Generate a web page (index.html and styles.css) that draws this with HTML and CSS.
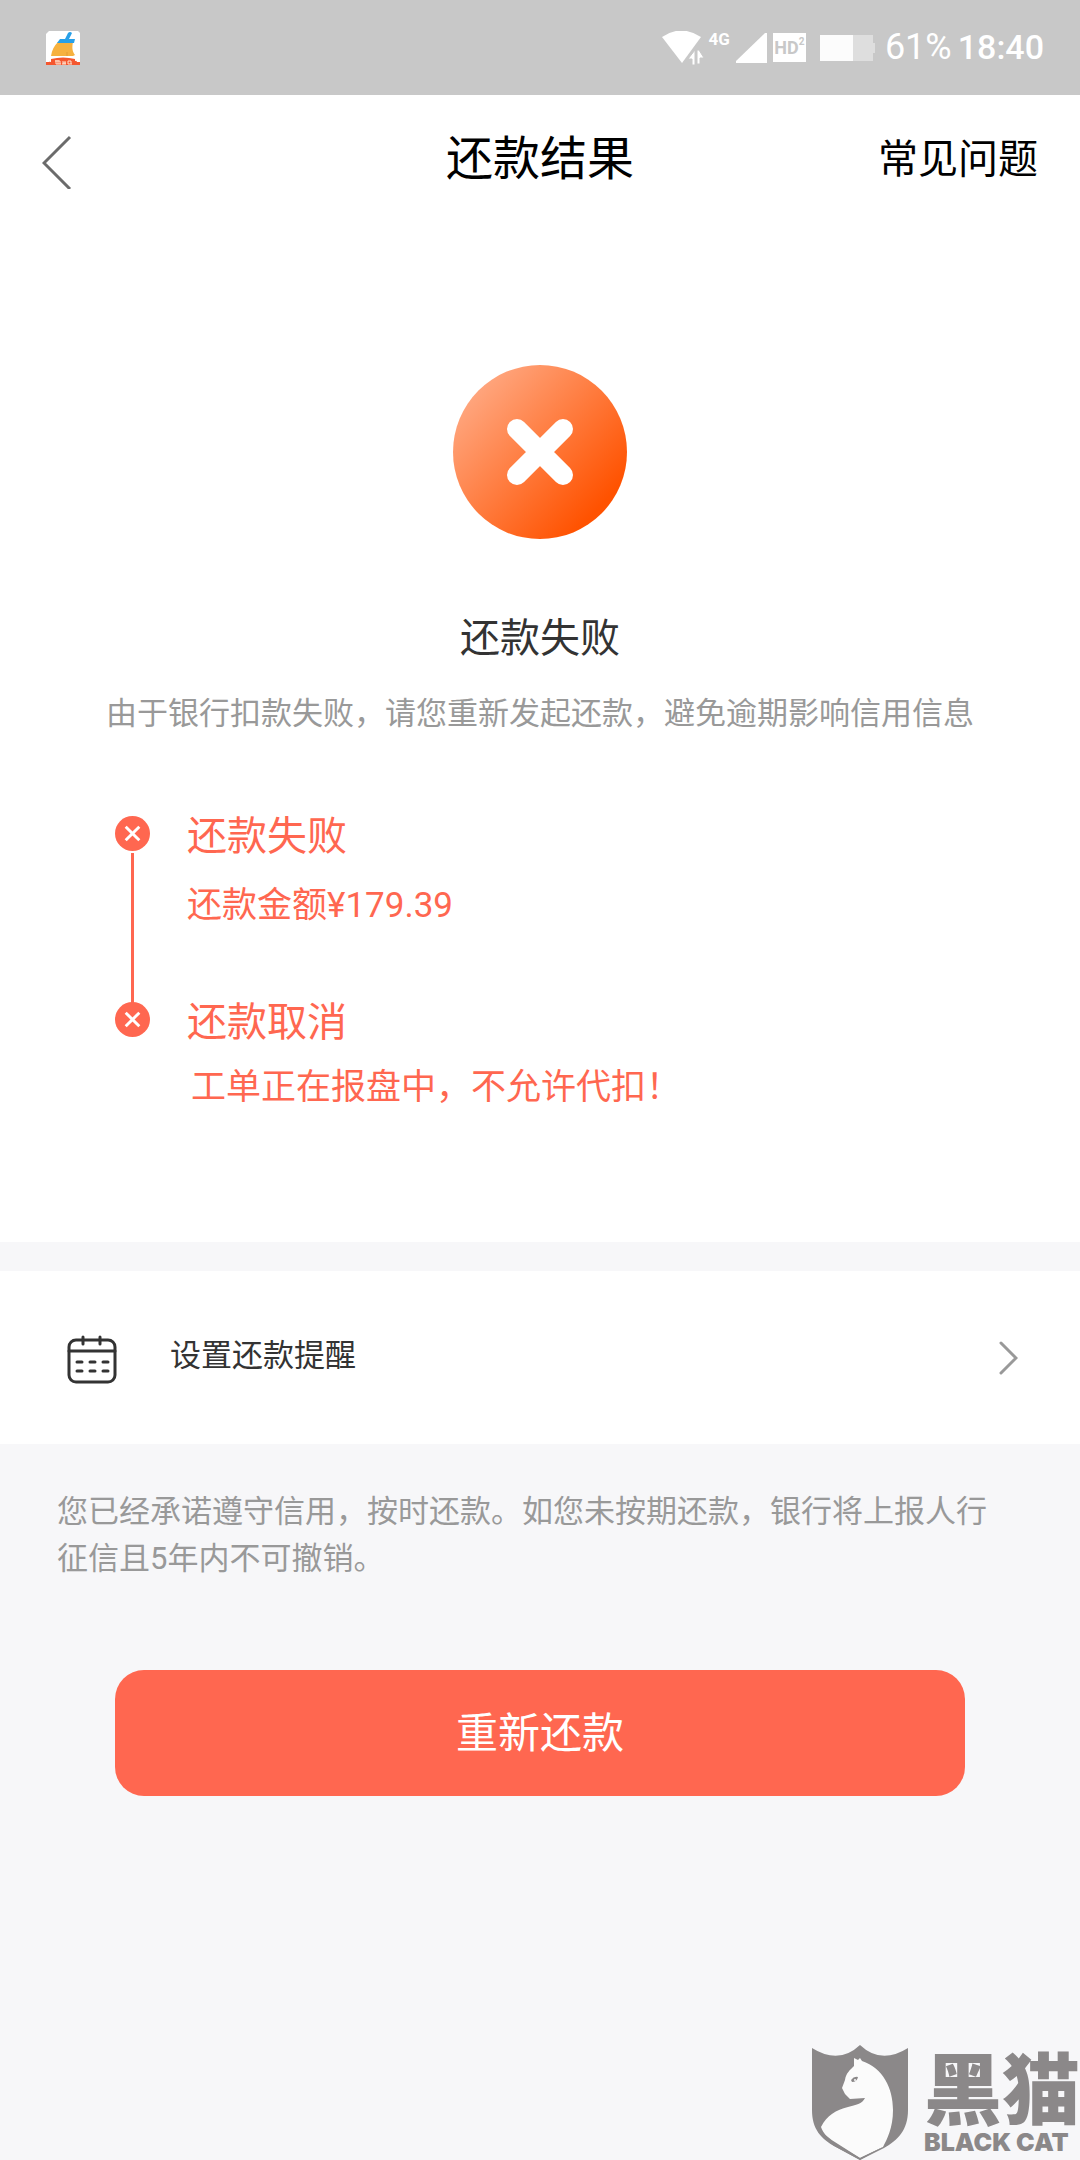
FILE: index.html
```html
<!DOCTYPE html>
<html lang="zh-CN">
<head>
  <meta charset="UTF-8">
  <meta name="viewport" content="width=device-width, initial-scale=1">
  <title>还款结果</title>
  <link rel="stylesheet" href="styles.css">
</head>
<body>

  <div class="status-bar">
    <svg class="app-icon" viewBox="0 0 34 34" aria-hidden="true">
      <path fill="#fff" d="M3 0h29l2 2v32H0V3z"/>
      <path fill="#f6b13f" d="M12 11h15c-1 5-1 9 2 13l-2 1H5c1-6 3-10 7-14z"/>
      <path stroke="#e39a35" d="M21 21v4" fill="none"/>
      <path fill="#28a0e8" d="M14 8h5l3-6q2-2 4 0l-3 6h6l-1 4H11z"/>
      <path fill="#f4572f" d="M5 28q12-3 24 0v2l5-1v5H0v-4l5 1z"/>
      <path stroke="#ffe3cf" stroke-width="1" d="M10 29v4m2-4v4m2-3v3m3-3v3m2-3v3m3-3v3m3-3v3M9 30h5m3 2h3m2-2h3M10 33h5m1 0h4m2 0h4" fill="none"/>
      <path fill="#fff" d="M0 28l4 1-1 2H0zm34 0l-4 1 1 2h3z"/>
    </svg>

    <div class="status-right">
      <svg class="wifi" viewBox="0 0 42 34" aria-hidden="true">
        <path fill="#fff" d="M0 6Q19-7 39 6L20 32z"/>
        <path fill="#fff" stroke="#c8c8c8" d="M26 28l7-9v15h-3v-6zM35 33V19h2l5 8h-4v6z"/>
      </svg>
      <span class="network">4G</span>
      <svg class="signal" viewBox="0 0 31 30" aria-hidden="true">
        <path fill="#fff" d="M0 30v-2L29 0h2v30z"/>
      </svg>
      <span class="hd">HD<sup>2</sup></span>
      <svg class="battery" viewBox="0 0 55 26" aria-hidden="true">
        <path fill="#dedede" d="M33 0h20v8h2v10h-2v8H33z"/>
        <path fill="#fcfcfc" d="M0 0h33v26H0z"/>
      </svg>
      <span class="percent">61%</span>
      <span class="time">18:40</span>
    </div>
  </div>

  <header class="header">
    <button class="back" type="button" aria-label="返回">
      <svg viewBox="0 0 30 60" aria-hidden="true">
        <path d="M28 8L2 34l26 26"/>
      </svg>
    </button>
    <h1>还款结果</h1>
    <a class="help" href="#">常见问题</a>
  </header>

  <main>
    <section class="result">
      <svg class="result-icon" viewBox="0 0 174 174" aria-hidden="true">
        <defs>
          <linearGradient id="orange" x1="0.1" y1="0.15" x2="0.83" y2="0.83">
            <stop offset="0" stop-color="#ffa780"/>
            <stop offset="1" stop-color="#ff5200"/>
          </linearGradient>
        </defs>
        <circle cx="87" cy="87" r="87" fill="url(#orange)"/>
        <path d="M64 64l46 46m0-46l-46 46" stroke="#fff" stroke-width="20" stroke-linecap="round"/>
      </svg>
      <h2>还款失败</h2>
      <p class="reason">由于银行扣款失败，请您重新发起还款，避免逾期影响信用信息</p>

      <ol class="timeline">
        <li>
          <div class="marker">
            <svg viewBox="0 0 36 36" aria-hidden="true">
              <circle cx="18" cy="18" r="18"/>
              <path d="M11 11l14 14m0-14L11 25"/>
            </svg>
          </div>
          <div class="step">
            <h3>还款失败</h3>
            <p>还款金额¥179.39</p>
          </div>
        </li>
        <li>
          <div class="marker">
            <svg viewBox="0 0 36 36" aria-hidden="true">
              <circle cx="18" cy="18" r="18"/>
              <path d="M11 11l14 14m0-14L11 25"/>
            </svg>
          </div>
          <div class="step">
            <h3>还款取消</h3>
            <p class="message">工单正在报盘中，不允许代扣！</p>
          </div>
        </li>
      </ol>
    </section>

    <a class="remind" href="#">
      <svg class="calendar" viewBox="0 0 50 54" aria-hidden="true">
        <rect x="2" y="9" width="46" height="42" rx="7"/>
        <path d="M2 20h46M16 6v7M33 6v7M10 31h5M23 31h5M36 31h5M10 40h5M23 40h5M36 40h5"/>
      </svg>
      <span>设置还款提醒</span>
      <svg class="arrow" viewBox="0 0 19 34" aria-hidden="true">
        <path d="M2 2l15 15L2 32"/>
      </svg>
    </a>

    <p class="notice">您已经承诺遵守信用，按时还款。如您未按期还款，银行将上报人行征信且5年内不可撤销。</p>

    <button class="retry" type="button">重新还款</button>
  </main>

  <footer class="watermark">
    <svg class="shield" viewBox="0 0 98 115" aria-hidden="true">
      <path fill="#8b8889" d="M1 3Q28 20 49 0Q70 20 97 3v62c0 20-10 30-24 38L49 115 25 102C10 94 1 84 1 65z"/>
      <path fill="#fbfbfb" d="M43 13l4 2 2-2 2 3C72 23 82 43 82 65c0 18-6 29-10 37l-23 11-24-14C17 94 12 88 10 82c6-12 15-17 27-20 8-2 14-3 17-9l-15 1-5-5-3-6 3-8c1-7 5-10 9-14z"/>
      <path fill="#8b8889" d="M40 35q3-4 7-3-1 5-6 5zM6 80q3 11 17 21l26 14 25-14-25 12-22-14Q13 91 6 80z"/>
      <circle cx="44" cy="35" r="1" fill="#fbfbfb"/>
    </svg>
    <div class="brand">
      <span class="brand-cn">黑猫</span>
      <span class="brand-en">BLACK CAT</span>
    </div>
  </footer>

</body>
</html>
```
FILE: styles.css
```css
* {
  box-sizing: border-box;
}

body {
  display: flex;
  flex-direction: column;
  min-height: 100vh;
  margin: 0;
  background: #f7f7f9;
  color: #333;
  font-family: Roboto, "Noto Sans CJK SC", sans-serif;
  font-size: 31px;
  line-height: 47px;
}

h1, h2, h3, p, ol {
  margin: 0;
  padding: 0;
  font-weight: 400;
}

a {
  color: inherit;
  text-decoration: none;
}

button {
  border: none;
  font-family: inherit;
  cursor: pointer;
}

svg {
  display: block;
  flex: none;
}

/* status bar */
.status-bar {
  display: flex;
  justify-content: space-between;
  align-items: center;
  height: 95px;
  padding: 0 36px 0 46px;
  background: #c8c8c8;
  color: #fff;
}

.app-icon {
  width: 34px;
  height: 34px;
}

.status-right {
  display: flex;
  align-items: center;
}

.wifi {
  width: 42px;
  height: 34px;
}

.network {
  align-self: flex-start;
  margin: 0 6px 0 5px;
  font-size: 17px;
  font-weight: 700;
  line-height: 30px;
}

.signal {
  width: 31px;
  height: 30px;
}

.hd {
  display: flex;
  justify-content: center;
  width: 33px;
  margin: 0 14px 0 6px;
  background: #fff;
  color: #c8c8c8;
  font-size: 18px;
  font-weight: 700;
  line-height: 29px;
}

.hd sup {
  font-size: 10px;
  line-height: 18px;
}

.battery {
  width: 55px;
  height: 26px;
}

.percent {
  margin: 0 6px 0 10px;
  font-size: 36px;
}

.time {
  font-size: 34px;
  font-weight: 500;
}

/* page header */
.header {
  display: grid;
  grid-template-columns: 1fr auto 1fr;
  align-items: center;
  height: 128px;
  padding: 0 42px;
  background: #fff;
  color: #000;
}

.header h1 {
  font-size: 47px;
  line-height: 60px;
}

.back {
  justify-self: start;
  padding: 0;
  background: none;
}

.back svg {
  width: 30px;
  height: 60px;
  fill: none;
  stroke: #6b6b6b;
  stroke-width: 3;
}

.help {
  justify-self: end;
  font-size: 40px;
}

/* result */
.result {
  padding: 142px 0 131px;
  background: #fff;
  text-align: center;
}

.result-icon {
  width: 174px;
  height: 174px;
  margin: 0 auto 70px;
}

.result h2 {
  font-size: 40px;
  line-height: 60px;
}

.reason {
  margin-top: 21px;
  color: #999;
}

.timeline {
  margin-top: 70px;
  padding: 0 115px;
  list-style: none;
  color: #ff6750;
  text-align: left;
}

.timeline li {
  display: flex;
  gap: 37px;
}

.marker {
  display: flex;
  flex-direction: column;
  align-items: center;
  padding-top: 9px;
}

.marker svg {
  width: 35px;
  height: 35px;
}

.marker circle {
  fill: #ff6750;
}

.marker path {
  fill: none;
  stroke: #fff;
  stroke-width: 3;
}

/* line that joins a step to the next one */
.timeline li:not(:last-child) .marker::after {
  content: "";
  flex: 1;
  width: 3px;
  margin: 2px 0 -10px;
  background: #ff6750;
}

.timeline li:not(:last-child) .step {
  padding-bottom: 64px;
}

.step h3 {
  font-size: 40px;
  line-height: 60px;
}

.step p {
  margin-top: 15px;
  font-size: 35px;
}

.step .message {
  margin-top: 11px;
  padding-left: 4px;
}

/* reminder row */
.remind {
  display: flex;
  align-items: center;
  height: 173px;
  margin-top: 29px;
  padding: 0 62px 0 67px;
  background: #fff;
}

.remind span {
  flex: 1;
  margin-left: 53px;
  padding-bottom: 4px;
}

.calendar {
  width: 50px;
  height: 54px;
  fill: none;
  stroke: #333;
  stroke-width: 3;
  stroke-linecap: round;
}

.arrow {
  width: 19px;
  height: 34px;
  fill: none;
  stroke: #999;
  stroke-width: 3;
  stroke-linecap: round;
}

.notice {
  padding: 44px 72px 0 57px;
  color: #999;
}

.retry {
  display: block;
  width: calc(100% - 230px);
  height: 126px;
  margin: 88px auto 0;
  padding: 0 0 8px;
  border-radius: 29px;
  background: #ff6750;
  color: #fff;
  font-size: 42px;
}

/* watermark */
.watermark {
  display: flex;
  gap: 15px;
  margin-top: auto;
  justify-content: flex-end;
  color: #8b8889;
}

.shield {
  width: 98px;
  height: 115px;
}

.brand {
  display: flex;
  flex-direction: column;
}

.brand-cn {
  font-family: "Noto Sans CJK SC", sans-serif;
  font-size: 78px;
  font-weight: 900;
  line-height: 80px;
}

.brand-en {
  font-family: Inter, sans-serif;
  font-size: 25px;
  font-weight: 900;
  line-height: 35px;
  white-space: nowrap;
}
```
